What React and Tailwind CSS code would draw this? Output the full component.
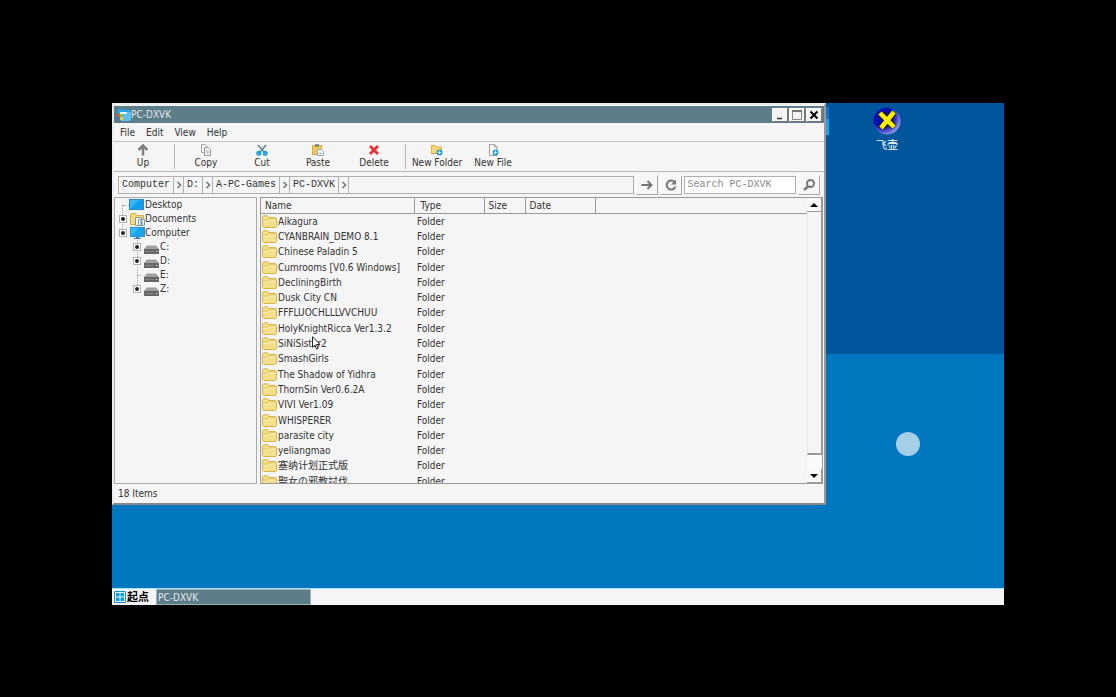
const FOLDERS = [
  "Aikagura",
  "CYANBRAIN_DEMO 8.1",
  "Chinese Paladin 5",
  "Cumrooms [V0.6 Windows]",
  "DecliningBirth",
  "Dusk City CN",
  "FFFLUOCHLLLVVCHUU",
  "HolyKnightRicca Ver1.3.2",
  "SiNiSistar2",
  "SmashGirls",
  "The Shadow of Yidhra",
  "ThornSin Ver0.6.2A",
  "VIVI Ver1.09",
  "WHISPERER",
  "parasite city",
  "yeliangmao",
  "塞纳计划正式版",
  "聖女の邪教討伐",
];

const MENUS = ["File", "Edit", "View", "Help"];
const CRUMBS = ["Computer", "D:", "A-PC-Games", "PC-DXVK"];
const DRIVES = [
  { name: "C:", expandable: true },
  { name: "D:", expandable: true },
  { name: "E:", expandable: false },
  { name: "Z:", expandable: true },
];

function FolderIcon() {
  return (
    <svg viewBox="0 0 15 13" className="mr-px h-[13px] w-[15px] shrink-0" aria-hidden="true">
      <path d="M.5 11.5V2L1.5.8h4.2L7 2.5h6.5l1 1v8l-.9 1H1.4z" fill="#f3e08a" stroke="#d8b44a" />
      <path d="M1 6.200h4.400L6.600 4.900H14" fill="none" stroke="#fff6c8" />
      <path d="M1 5.200h4.400L6.600 3.900H14" fill="none" stroke="#d9b44c" strokeWidth=".7" />
    </svg>
  );
}

function MonitorIcon() {
  return (
    <svg viewBox="0 0 15 12" className="h-3 w-[15px] shrink-0" aria-hidden="true">
      <rect x=".5" y=".5" width="14" height="9" fill="#18a4ee" stroke="#2b8fd0" />
      <path d="M1 9V1h8z" fill="#3bb8f7" />
      <path d="M4 11.500h7M6 10.500h3" stroke="#3d82ad" />
    </svg>
  );
}

function DesktopIcon() {
  return (
    <svg viewBox="0 0 15 12" className="mr-px h-3 w-[15px] shrink-0" aria-hidden="true">
      <rect x=".5" y=".5" width="14" height="10" fill="#12a0ee" stroke="#2589cc" />
      <path d="M1 10V1h9z" fill="#35b4f6" />
    </svg>
  );
}

function DocumentsIcon() {
  return (
    <svg viewBox="0 0 15 13" className="h-[13px] w-[15px] shrink-0" aria-hidden="true">
      <path d="M.5 11.500V1.500L1.500.5h4L7 2.500h6.500v9z" fill="#f5dc7c" stroke="#d6ae3c" />
      <path d="M5.500 4.500h6v8h-6zM8.500 6.500h6v6h-6z" fill="#f4f8fb" stroke="#7f99ad" />
      <path d="M10 9h3M10 11h3" stroke="#5b8db8" />
    </svg>
  );
}

function DriveIcon() {
  return (
    <svg viewBox="0 0 15 9" className="mt-1 mr-px h-[9px] w-[15px] shrink-0" aria-hidden="true">
      <path d="M3 .5h9l3 3.500H0z" fill="#a0a0a0" />
      <path d="M0 4h15v5H0z" fill="#666" />
      <path d="M1 6.500h9" stroke="#858585" />
      <path d="M12 6.500h1.500" stroke="#c8d8c8" />
    </svg>
  );
}

function ExplorerIcon() {
  return (
    <svg viewBox="0 0 15 14" className="h-[14px] w-[15px]" aria-hidden="true">
      <path d="M2 1h5l1 1h6v5H2z" fill="#27a4ea" />
      <path d="M5 5l1-1h9v8l-2 1H5z" fill="#5cc0f5" />
      <path d="M4 4h7v2H4z" fill="#e6f6ff" />
      <path d="M1 6h3v3H1z" fill="#e8593b" />
      <path d="M4 6h3v3H4z" fill="#7cc142" />
      <path d="M1 9h3v3H1z" fill="#2f7fd6" />
      <path d="M4 9h3v3H4z" fill="#f5c53a" />
    </svg>
  );
}

function UpIcon() {
  return (
    <svg viewBox="0 0 12 12" className="size-3" aria-hidden="true">
      <path d="M6 11.500V2M1.500 6L6 1.500 10.500 6" fill="none" stroke="#808080" strokeWidth="2.500" />
    </svg>
  );
}

function CopyIcon() {
  return (
    <svg viewBox="0 0 12 12" className="size-3" aria-hidden="true">
      <path d="M1.500.5h4l2 2v6h-6z" fill="#fafafa" stroke="#a5a5a5" />
      <path d="M4.500 3.500h4l2 2v6h-6z" fill="#f6f6f6" stroke="#999" />
      <path d="M6 7h3M6 9h3" stroke="#aaa" />
    </svg>
  );
}

function CutIcon() {
  return (
    <svg viewBox="0 0 12 12" className="size-3" aria-hidden="true">
      <path d="M2 1l6.500 7.500M10 1L3.500 8.500" stroke="#6f8796" strokeWidth="1.800" />
      <circle cx="2.800" cy="9.300" r="1.500" fill="none" stroke="#1c9ad6" strokeWidth="2" />
      <circle cx="9.200" cy="9.300" r="1.500" fill="none" stroke="#1c9ad6" strokeWidth="2" />
    </svg>
  );
}

function PasteIcon() {
  return (
    <svg viewBox="0 0 12 12" className="size-3" aria-hidden="true">
      <path d="M.5 1.500h9v9h-9z" fill="#f0c860" stroke="#d9a93c" />
      <path d="M3 0h4v3H3z" fill="#8d8d8d" />
      <path d="M5.500 5.500h4l2 2v4h-6z" fill="#f5f9fc" stroke="#9aabb8" />
      <path d="M7 9.500h3" stroke="#8ab" />
    </svg>
  );
}

function DeleteIcon() {
  return (
    <svg viewBox="0 0 12 12" className="size-3" aria-hidden="true">
      <path d="M2 2l8 8M10 2l-8 8" stroke="#e2353a" strokeWidth="3" />
    </svg>
  );
}

function PlusBadge() {
  return (
    <>
      <circle cx="8.500" cy="8.500" r="3" fill="#2b9bd8" />
      <path d="M8.500 6.800v3.400M6.800 8.500h3.400" stroke="#d8f1ff" />
    </>
  );
}

function NewFolderIcon() {
  return (
    <svg viewBox="0 0 12 12" className="size-3" aria-hidden="true">
      <path d="M.5 9.500v-8h4l1 1.500h5v6.500z" fill="#f5d67a" stroke="#d9ad48" />
      <PlusBadge />
    </svg>
  );
}

function NewFileIcon() {
  return (
    <svg viewBox="0 0 12 12" className="size-3" aria-hidden="true">
      <path d="M2.500.5h5l2.500 2.500v8.500H2.500z" fill="#fcfcfc" stroke="#a0a0a0" />
      <path d="M7.500.5v2.500H10" fill="none" stroke="#a0a0a0" />
      <PlusBadge />
    </svg>
  );
}

function ToolButton({ icon, label }) {
  return (
    <button className="flex w-14 flex-col items-center pt-0.5 whitespace-nowrap">
      {icon}
      <span className="leading-[14px]">{label}</span>
    </button>
  );
}

function Separator() {
  return <div className="mx-0.5 my-0.5 w-px bg-[#b4b4b4]" />;
}

function Expander({ show }) {
  if (!show) {
    return <span className="mr-[3px] ml-1 h-0 w-1 border-t border-dotted border-[#aaa]" />;
  }
  return (
    <button
      aria-label="Expand"
      className="relative mr-[3px] flex size-2 items-center justify-center border border-[#b0b0b0] bg-white"
    >
      <span className="size-1 rounded-full bg-[#222]" />
    </button>
  );
}

function WindowButton({ label, children }) {
  return (
    <button
      aria-label={label}
      className="flex h-[14px] w-4 items-center justify-center border border-t-white border-l-white border-r-[#777] border-b-[#777] bg-[#f4f4f4]"
    >
      <svg viewBox="0 0 12 12" className="size-3" fill="none" aria-hidden="true">
        {children}
      </svg>
    </button>
  );
}

function AddressButton({ label, children }) {
  return (
    <button
      aria-label={label}
      className="flex h-5 w-[22px] items-center justify-center border border-t-white border-l-white border-r-[#aaa] border-b-[#aaa] bg-[#f6f6f6]"
    >
      <svg viewBox="0 0 14 14" className="size-[14px]" fill="none" stroke="#777" strokeWidth="2" aria-hidden="true">
        {children}
      </svg>
    </button>
  );
}

function ScrollButton({ label, d }) {
  return (
    <button
      aria-label={label}
      className="flex h-[14px] items-center justify-center border-r border-b border-[#999] bg-[#f8f8f8]"
    >
      <svg viewBox="0 0 8 4" className="h-1 w-2" aria-hidden="true">
        <path d={d} fill="#000" />
      </svg>
    </button>
  );
}

function TitleBar() {
  return (
    <header className="flex h-[17px] items-center bg-[#5d7d88] px-0.5 text-[#e3eaed]">
      <ExplorerIcon />
      <h1 className="flex-1">PC-DXVK</h1>
      <div className="flex gap-px">
        <WindowButton label="Minimize">
          <path d="M3 9.500h5" stroke="#333" strokeWidth="1.500" />
        </WindowButton>
        <WindowButton label="Maximize">
          <path d="M1.500 2v8.500h9V2" stroke="#888" />
          <path d="M1 2h10" stroke="#777" strokeWidth="2" />
        </WindowButton>
        <WindowButton label="Close">
          <path d="M2.500 2.500l7 7M9.500 2.500l-7 7" stroke="#000" strokeWidth="2" />
        </WindowButton>
      </div>
    </header>
  );
}

function AddressBar() {
  return (
    <div className="flex h-[26px] items-center gap-0.5 border-t border-[#b8b8b8] px-1 font-['Liberation_Mono',monospace]">
      <nav aria-label="Path" className="flex h-[18px] flex-1 border border-[#b0b0b0]">
        {CRUMBS.map((crumb) => (
          <div key={crumb} className="flex">
            <button className="border-r border-[#b0b0b0] px-[3px]">{crumb}</button>
            <button
              aria-label={`Browse ${crumb}`}
              className="flex w-[10px] items-center justify-center border-r border-[#b0b0b0]"
            >
              <svg viewBox="0 0 6 8" className="h-2 w-1.5" aria-hidden="true">
                <path d="M1.500 1L4.500 4 1.500 7" fill="none" stroke="#777" strokeWidth="1.600" />
              </svg>
            </button>
          </div>
        ))}
      </nav>
      <AddressButton label="Go">
        <path d="M1.500 7h10M7.500 3l4 4-4 4" />
      </AddressButton>
      <AddressButton label="Refresh">
        <path d="M10.500 4a4.500 4.500 0 1 0 1 4.500" />
        <path d="M12 1.500v5H7z" fill="#777" stroke="none" />
      </AddressButton>
      <input
        type="text"
        aria-label="Search PC-DXVK"
        placeholder="Search PC-DXVK"
        className="h-[18px] w-28 border border-[#b0b0b0] bg-white px-[3px] outline-none placeholder:text-[#888]"
      />
      <AddressButton label="Search">
        <circle cx="8.500" cy="5.500" r="3.500" />
        <path d="M6 8.500L2 12" strokeWidth="2.500" />
      </AddressButton>
    </div>
  );
}

function FolderTree() {
  return (
    <nav aria-label="Folders" className="w-[143px] border border-[#aaa] leading-[14px]">
      <ul className="relative pl-1">
        {/* guide lines between the nodes */}
        <li aria-hidden="true" className="absolute top-[7px] left-[7px] h-7 border-l border-dotted border-[#aaa]" />
        <li aria-hidden="true" className="absolute top-[42px] left-[22px] h-[49px] border-l border-dotted border-[#aaa]" />
        <li className="flex h-[14px] items-center">
          <span className="ml-1 h-0 w-1.5 border-t border-dotted border-[#aaa]" />
          <DesktopIcon />
          Desktop
        </li>
        <li className="flex h-[14px] items-center">
          <Expander show />
          <DocumentsIcon />
          Documents
        </li>
        <li>
          <div className="flex h-[14px] items-center">
            <Expander show />
            <MonitorIcon />
            Computer
          </div>
          <ul className="pl-[14px]">
            {DRIVES.map((drive) => (
              <li key={drive.name} className="flex h-[14px] items-center">
                <Expander show={drive.expandable} />
                <DriveIcon />
                {drive.name}
              </li>
            ))}
          </ul>
        </li>
      </ul>
    </nav>
  );
}

function FileList() {
  return (
    <div className="flex min-w-0 flex-1 border border-[#999]">
      <div className="min-w-0 flex-1 overflow-hidden">
        <table className="h-[291px] w-full table-fixed text-left">
          <thead>
            <tr className="h-[15px]">
              <th className="w-[153px] border-r border-b border-[#999] px-1 font-normal">Name</th>
              <th className="w-[70px] border-r border-b border-[#999] px-1.5 font-normal">Type</th>
              <th className="w-[41px] border-r border-b border-[#999] px-1 font-normal">Size</th>
              <th className="w-[70px] border-r border-b border-[#999] px-1 font-normal">Date</th>
              <th className="border-b border-[#999]" aria-label="Empty" />
            </tr>
          </thead>
          <tbody>
            {FOLDERS.map((name) => (
              <tr key={name}>
                <td className="p-0 pl-px">
                  <div className="flex h-[15px] items-center whitespace-nowrap">
                    <FolderIcon />
                    {name}
                  </div>
                </td>
                <td className="p-0 pl-[3px]">Folder</td>
                <td />
                <td />
                <td />
              </tr>
            ))}
          </tbody>
        </table>
      </div>
      <div className="flex w-[15px] flex-col bg-[#f9f9f9]">
        <ScrollButton label="Scroll up" d="M0 4L4 0l4 4z" />
        <div className="mb-3.5 flex-1 border-r border-b-2 border-l border-[#999] border-l-[#e6e6e6] bg-[#f5f5f5]" />
        <ScrollButton label="Scroll down" d="M0 0h8L4 4z" />
      </div>
    </div>
  );
}

function ExplorerWindow() {
  return (
    <section className="relative w-4/5 border-2 border-t-[#e9eeee] border-r-[#999] border-b-[#888] border-l-[#e9eeee] bg-[#f5f5f5]">
      <div className="border-t border-[#f5f5f5]">
        <TitleBar />
      </div>
      <nav aria-label="Menu" className="flex h-[19px] items-center gap-[11px] border-b border-[#c4c4c4] px-1.5">
        {MENUS.map((menu) => (
          <button key={menu}>{menu}</button>
        ))}
      </nav>
      <div className="flex h-[29px] gap-px pl-px">
        <ToolButton icon={<UpIcon />} label="Up" />
        <Separator />
        <div className="flex">
          <ToolButton icon={<CopyIcon />} label="Copy" />
          <ToolButton icon={<CutIcon />} label="Cut" />
          <ToolButton icon={<PasteIcon />} label="Paste" />
          <ToolButton icon={<DeleteIcon />} label="Delete" />
        </div>
        <Separator />
        <div className="flex">
          <ToolButton icon={<NewFolderIcon />} label="New Folder" />
          <ToolButton icon={<NewFileIcon />} label="New File" />
        </div>
      </div>
      <AddressBar />
      <div className="flex h-[287px] gap-[3px] pr-px">
        <FolderTree />
        <FileList />
      </div>
      <footer className="h-[19px] px-1 leading-[19px]">18 Items</footer>
      {/* mouse pointer */}
      <svg viewBox="0 0 9 14" className="absolute top-[231px] left-[198px] h-[14px] w-[9px]" aria-hidden="true">
        <path d="M.5.7v10.500l2.400-2.200 1.700 4.100 1.600-.7-1.700-3.900h3.400z" fill="#fff" stroke="#222" />
      </svg>
    </section>
  );
}

function Taskbar() {
  return (
    <footer className="flex h-[17px] border-t border-[#a8e4f8] bg-[#f5f5f8]">
      <button className="flex w-11 items-center gap-px pl-0.5 text-[11px] font-bold text-black">
        <svg viewBox="0 0 12 12" className="size-3" aria-hidden="true">
          <path d="M.5.5h11v11H.5z" fill="#e4f7ff" stroke="#1390cf" />
          <path d="M2 2h3.500v3.500H2zM6.500 2H10v3.500H6.500zM2 6.500h3.500V10H2zM6.500 6.500H10V10H6.500z" fill="#1599d6" />
        </svg>
        起点
      </button>
      <button className="w-[155px] border border-[#9fb3ba] bg-[#5d7d88] pl-px text-left text-[#e3eaed]">
        PC-DXVK
      </button>
    </footer>
  );
}

export default function App() {
  return (
    <main className="flex min-h-screen flex-col bg-black px-28 pt-[103px] pb-[92px] font-['DejaVu_Sans_Condensed','Noto_Sans_CJK_SC',sans-serif] text-[10px] leading-[13px] text-[#333]">
      <div className="relative flex flex-1 flex-col overflow-hidden bg-[linear-gradient(#00569d_50%,#0077be_50%)]">
        <div className="absolute top-1 left-[685px] flex w-8 flex-col items-end text-[11px] text-white">
          <div className="h-7 w-8 border-t-[12px] border-[#0b78cc] bg-[#1ea2f0]" />
          <span className="pt-1">电脑机</span>
        </div>
        <a href="#" className="absolute top-1 right-[93px] flex w-12 flex-col items-center text-white">
          <svg viewBox="0 0 28 28" className="size-7" aria-hidden="true">
            <defs>
              <radialGradient id="orb" cx=".35" cy=".35" r=".75">
                <stop offset=".5" stopColor="#0a0fb4" />
                <stop offset="1" stopColor="#aab0ee" />
              </radialGradient>
            </defs>
            <circle cx="14" cy="14" r="13.500" fill="url(#orb)" />
            <path d="M7 6l14 14M21 5L8 21" stroke="#222" strokeWidth="6.500" />
            <path d="M7 6l14 14M21 5L8 21" stroke="#fff200" strokeWidth="4.500" />
          </svg>
          <span className="pt-1 text-[11px]">飞壶</span>
        </a>
        <ExplorerWindow />
        <div className="absolute right-[84px] bottom-[149px] size-6 rounded-full bg-[#a4cfe6]" />
        <div className="flex-1" />
        <Taskbar />
      </div>
    </main>
  );
}
